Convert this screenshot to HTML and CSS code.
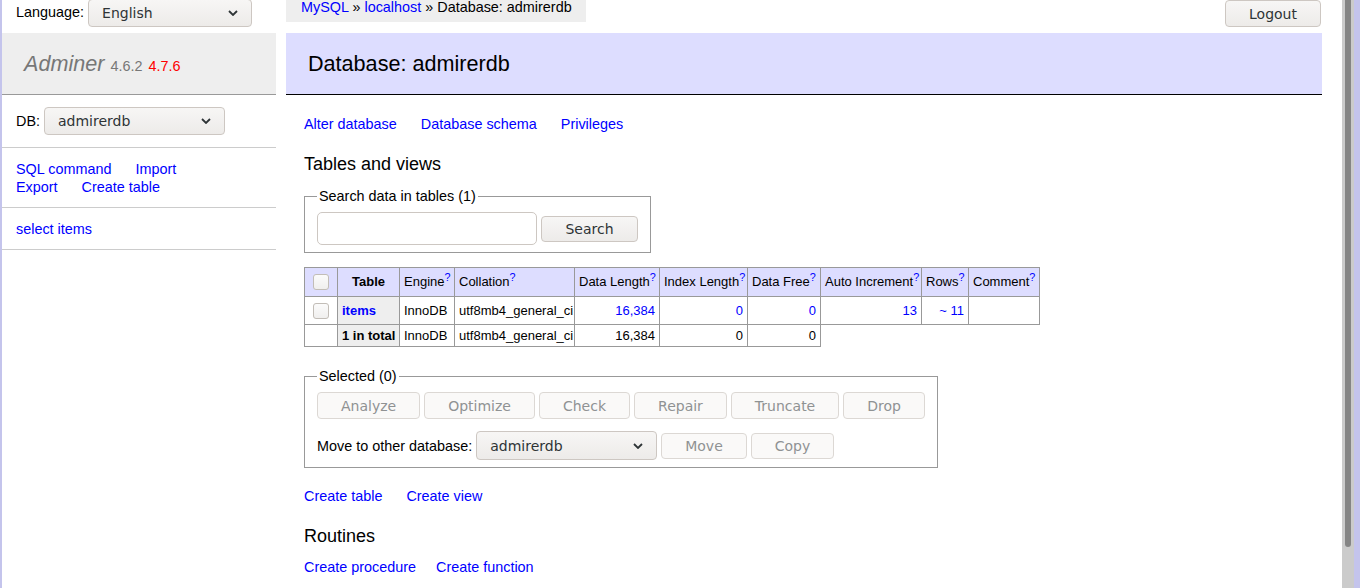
FILE: index.html
```html
<!DOCTYPE html>
<html lang="en">
<head>
<meta charset="utf-8">
<title>Database: admirerdb - Adminer</title>
<link rel="stylesheet" href="styles.css">
</head>
<body>
<div class="window">
  <div class="frame-left"></div>
  <div class="page">
    <aside class="menu">
      <div class="lang">
        <span class="lang-label">Language:</span>
        <span class="select select-lang"><span class="select-text">English</span><svg class="chev" width="10" height="6" viewBox="0 0 10 6"><path d="M1 1l4 4 4-4" fill="none" stroke="#2e3436" stroke-width="1.8"/></svg></span>
      </div>
      <h1 class="brand"><a class="brand-name" href="#">Adminer</a> <span class="version">4.6.2</span> <a class="new-version" href="#">4.7.6</a></h1>
      <div class="menu-section db-row">
        <span>DB:</span>
        <span class="select select-db"><span class="select-text">admirerdb</span><svg class="chev" width="10" height="6" viewBox="0 0 10 6"><path d="M1 1l4 4 4-4" fill="none" stroke="#2e3436" stroke-width="1.8"/></svg></span>
      </div>
      <div class="menu-section menu-links">
        <div><a href="#">SQL command</a> <a href="#">Import</a></div>
        <div><a href="#">Export</a> <a href="#">Create table</a></div>
      </div>
      <div class="menu-section">
        <a href="#">select items</a>
      </div>
    </aside>
    <main class="content">
      <div class="topbar">
        <div class="breadcrumb"><a href="#">MySQL</a> » <a href="#">localhost</a> » Database: admirerdb</div>
        <button class="btn logout">Logout</button>
      </div>
      <h2 class="title">Database: admirerdb</h2>
      <div class="body">
        <p class="links"><a href="#">Alter database</a> <a href="#">Database schema</a> <a href="#">Privileges</a></p>
        <h3 class="section">Tables and views</h3>
        <fieldset class="box">
          <legend>Search data in tables (1)</legend>
          <div class="search-row">
            <span class="input"></span>
            <button class="btn btn-search">Search</button>
          </div>
        </fieldset>
        <table class="tables">
          <thead>
            <tr>
              <td class="cbcell w-cb"><span class="cb"></span></td>
              <th class="w-table">Table</th>
              <td class="w-engine">Engine<sup>?</sup></td>
              <td class="w-coll">Collation<sup>?</sup></td>
              <td class="w-dlen">Data Length<sup>?</sup></td>
              <td class="w-ilen">Index Length<sup>?</sup></td>
              <td class="w-dfree">Data Free<sup>?</sup></td>
              <td class="w-ai">Auto Increment<sup>?</sup></td>
              <td class="w-rows">Rows<sup>?</sup></td>
              <td class="w-comment">Comment<sup>?</sup></td>
            </tr>
          </thead>
          <tbody>
            <tr>
              <td class="cbcell"><span class="cb"></span></td>
              <th><a href="#">items</a></th>
              <td>InnoDB</td>
              <td>utf8mb4_general_ci</td>
              <td class="num"><a href="#">16,384</a></td>
              <td class="num"><a href="#">0</a></td>
              <td class="num"><a href="#">0</a></td>
              <td class="num"><a href="#">13</a></td>
              <td class="num"><a href="#">~ 11</a></td>
              <td></td>
            </tr>
            <tr>
              <td></td>
              <th>1 in total</th>
              <td>InnoDB</td>
              <td>utf8mb4_general_ci</td>
              <td class="num">16,384</td>
              <td class="num">0</td>
              <td class="num">0</td>
            </tr>
          </tbody>
        </table>
        <fieldset class="box selected">
          <legend>Selected (0)</legend>
          <div class="sel-rows">
            <div class="btn-row">
              <button class="btn disabled">Analyze</button>
              <button class="btn disabled">Optimize</button>
              <button class="btn disabled">Check</button>
              <button class="btn disabled">Repair</button>
              <button class="btn disabled">Truncate</button>
              <button class="btn disabled">Drop</button>
            </div>
            <div class="btn-row move-row">
              <span class="move-label">Move to other database:</span>
              <span class="select select-move"><span class="select-text">admirerdb</span><svg class="chev" width="10" height="6" viewBox="0 0 10 6"><path d="M1 1l4 4 4-4" fill="none" stroke="#2e3436" stroke-width="1.8"/></svg></span>
              <button class="btn disabled small">Move</button>
              <button class="btn disabled small">Copy</button>
            </div>
          </div>
        </fieldset>
        <p class="links after-box"><a href="#">Create table</a> <a href="#">Create view</a></p>
        <h3 class="section">Routines</h3>
        <p class="links tight"><a href="#">Create procedure</a><a href="#">Create function</a></p>
      </div>
    </main>
  </div>
  <div class="scrollbar"><div class="thumb"></div></div>
  <div class="frame-right"></div>
</div>
</body>
</html>
```

FILE: styles.css
```css
* { box-sizing: border-box; }
html, body { margin: 0; padding: 0; }
body {
  font: 14.4px/18px "Liberation Sans", Arial, sans-serif;
  color: #000;
  background: #fff;
  overflow: hidden;
}
a { color: #0000ff; text-decoration: none; }

.window { display: flex; height: 588px; overflow: hidden; }
.frame-left { width: 2px; flex: none; background: #c4c4ec; }
.frame-right { width: 6px; flex: none; background: #c4c4ec; }
.scrollbar { width: 12px; flex: none; background: #cbcbcb; }
.thumb { width: 6px; height: 547px; margin-left: 3px; background: #858585; border-radius: 0 0 3px 3px; }

.page { flex: 1; min-width: 0; display: flex; gap: 10px; padding-right: 20px; }

/* ---------- menu ---------- */
.menu { width: 274px; flex: none; }
.lang { height: 33px; display: flex; align-items: flex-start; gap: 4px; padding: 0 14px; }
.lang-label { padding-top: 3px; }
.select {
  position: relative;
  display: inline-flex;
  align-items: center;
  height: 28px;
  padding: 0 30px 0 13px;
  border: 1px solid #cdc7c2;
  border-radius: 4px;
  background: linear-gradient(#f7f6f5, #edebe9);
  font: 14px/18px "DejaVu Sans", sans-serif;
  color: #2e3436;
}
.chev { position: absolute; right: 13px; top: 10px; }
.select-lang { width: 164px; margin-top: -1px; }
.select-db { width: 181px; }
.select-move { width: 181px; height: 29px; }
.select-move .chev { top: 11px; }

.brand {
  height: 62px;
  margin: 0;
  padding: 17px 22px;
  background: #eee;
  border-bottom: 1px solid #999;
  font: normal 21.6px/27px "Liberation Sans", Arial, sans-serif;
  color: #777;
}
.brand-name { color: #777; font-style: italic; }
.version { font-size: 14.4px; line-height: 1; color: #777; }
.new-version { font-size: 14.4px; line-height: 1; color: #f00; }

.menu-section { border-bottom: 1px solid #ccc; padding: 12px 14px 11px; }
.db-row { display: flex; align-items: center; gap: 4px; padding-bottom: 12px; }
.menu-links a { margin-right: 20px; }

/* ---------- content ---------- */
.content { flex: 1; min-width: 0; }
.topbar { height: 33px; display: flex; justify-content: space-between; align-items: flex-start; }
.breadcrumb { background: #eee; height: 22px; line-height: 14px; padding: 0 14px 0 15px; white-space: nowrap; }

.btn {
  height: 27px;
  padding: 0 23px;
  border: 1px solid #cdc7c2;
  border-radius: 4px;
  background: linear-gradient(#f7f6f5, #edebe9);
  font: 14px/18px "DejaVu Sans", sans-serif;
  color: #2e3436;
}
.logout { width: 96px; padding: 0; margin-right: 1px; }
.btn-search { width: 97px; height: 26px; padding: 0; }
.btn.disabled { background: #faf9f8; border-color: #dcd8d4; color: #8f9293; }
.btn.small { height: 26px; }

.title {
  margin: 0;
  padding: 17px 22px;
  background: #ddf;
  border-bottom: 1px solid #000;
  font: normal 21.6px/27px "Liberation Sans", Arial, sans-serif;
}
.body { padding-left: 18px; }
.links { margin: 20px 0 0; }
.links a { margin-right: 20px; }
.links.after-box { margin-top: 19px; }
.links.tight { margin-top: 11px; }
.section { margin: 20px 0 0; font: normal 18px/22px "Liberation Sans", Arial, sans-serif; }

.box { width: fit-content; margin: 12px 0 0; padding: 7px 12px; border: 1px solid #999; }
.box legend { padding: 0 2px; line-height: 18px; }
.search-row { display: flex; align-items: center; gap: 4px; }
.input { display: block; width: 220px; height: 33px; border: 1px solid #cdc7c2; border-radius: 5px; background: #fff; }

.tables {
  margin-top: 14px;
  border-collapse: collapse;
  table-layout: fixed;
  width: 735px;
  font-size: 13px;
  line-height: 16px;
}
.tables th, .tables td { border: 1px solid #999; padding: 3px 4px 2px; vertical-align: middle; text-align: left; white-space: nowrap; overflow: visible; }
.tables thead th, .tables thead td { background: #ddf; padding-bottom: 3px; }
.tables thead th { text-align: center; }
.tables tbody th { background: #eee; }
.tables td.num { text-align: right; }
.tables sup { font-size: 10.8px; line-height: 0; color: #0000ff; }
.w-cb { width: 33px; }
.w-table { width: 62px; }
.w-engine { width: 55px; }
.w-coll { width: 120px; }
.w-dlen { width: 85px; }
.w-ilen { width: 88px; }
.w-dfree { width: 73px; }
.w-ai { width: 101px; }
.w-rows { width: 47px; }
.w-comment { width: 71px; }
.cb {
  display: inline-block;
  width: 16px; height: 16px;
  margin: 3px 4px;
  vertical-align: middle;
  border: 1px solid #c2bdb7;
  border-radius: 3px;
  background: linear-gradient(#fbfbfb, #f0efee);
}

.selected { margin-top: 20px; }
.sel-rows { display: flex; flex-direction: column; gap: 12px; }
.btn-row { display: flex; align-items: center; gap: 4px; }
```
